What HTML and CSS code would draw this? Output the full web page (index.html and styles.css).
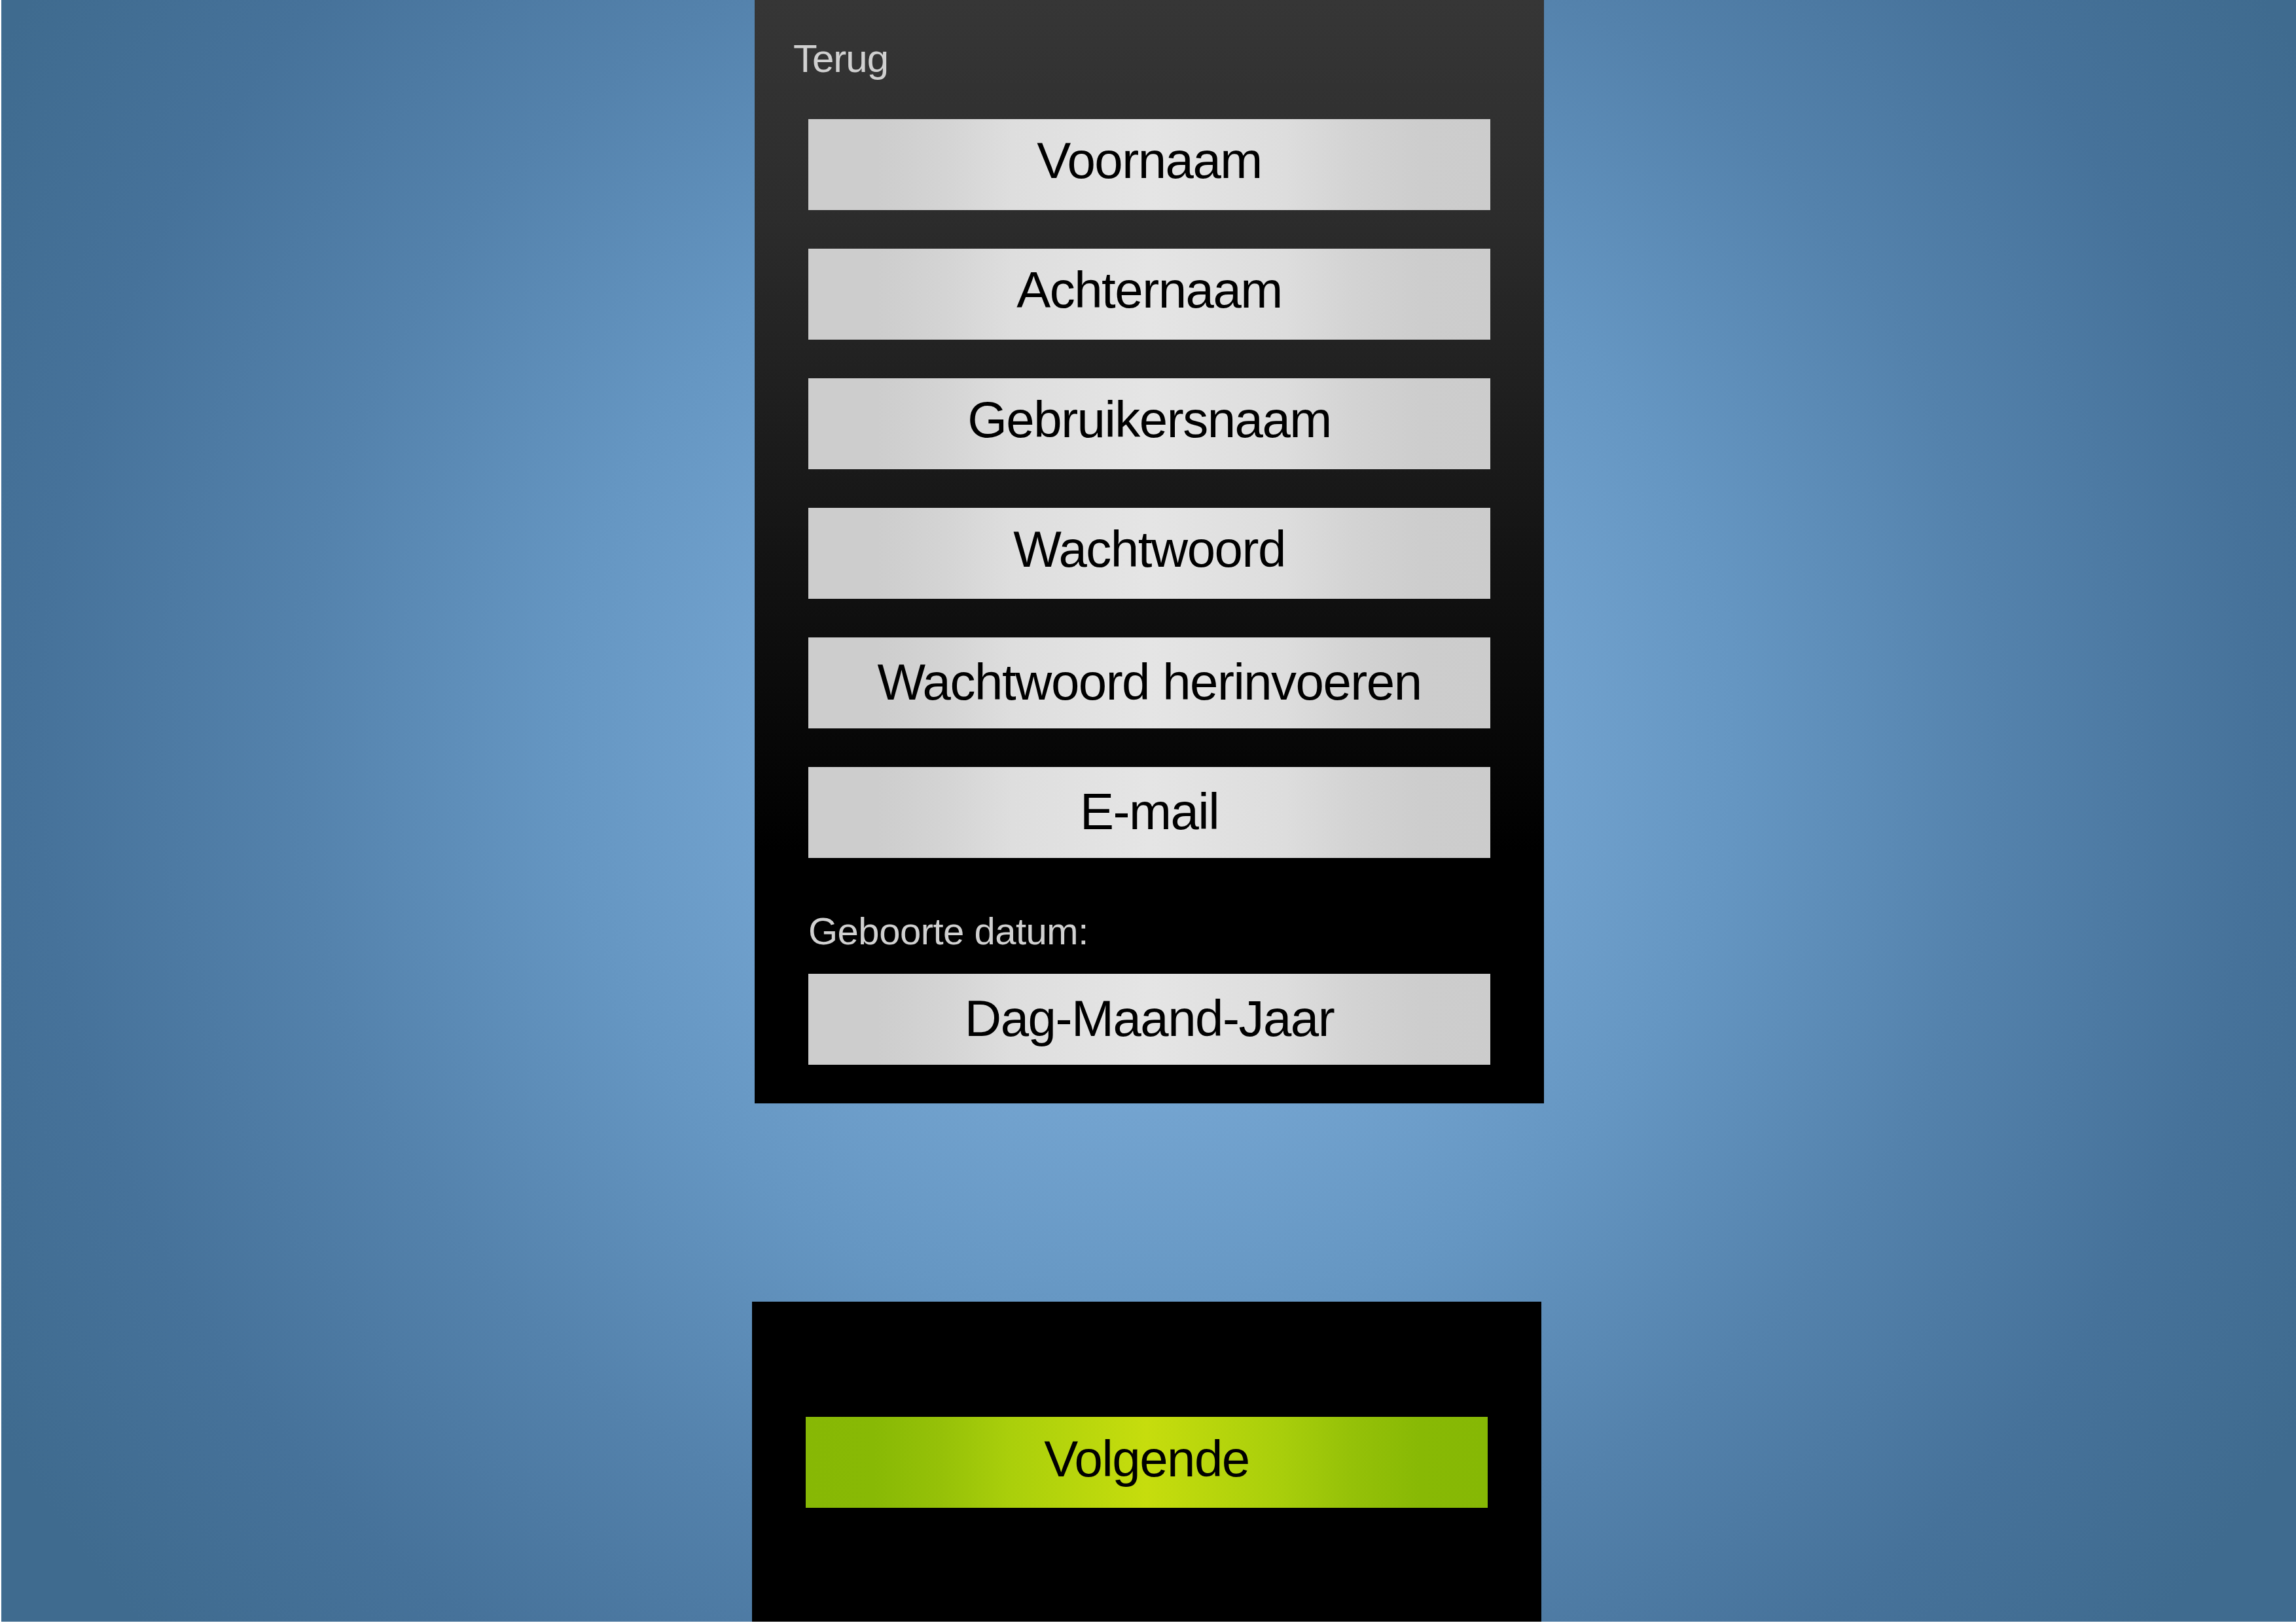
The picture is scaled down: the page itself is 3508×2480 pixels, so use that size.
FILE: index.html
```html
<!DOCTYPE html>
<html lang="nl">
<head>
<meta charset="utf-8">
<title>Registreren</title>
<link rel="stylesheet" href="styles.css">
</head>
<body>
<div class="stage">
  <section class="panel panel-form">
    <div class="back">Terug</div>
    <div class="fields">
      <div class="field">Voornaam</div>
      <div class="field">Achternaam</div>
      <div class="field">Gebruikersnaam</div>
      <div class="field">Wachtwoord</div>
      <div class="field centered">Wachtwoord herinvoeren</div>
      <div class="field centered">E-mail</div>
    </div>
    <div class="label">Geboorte datum:</div>
    <div class="field centered">Dag-Maand-Jaar</div>
  </section>
  <section class="panel panel-next">
    <div class="field next">Volgende</div>
  </section>
</div>
</body>
</html>
```

FILE: styles.css
```css
html, body {
  margin: 0;
  padding: 0;
  background: #ffffff;
}

body {
  font-family: "Liberation Sans", Arial, sans-serif;
  width: 3508px;
  height: 2480px;
  overflow: hidden;
}

.stage {
  margin-left: 2px;
  width: 3506px;
  height: 2478px;
  background: radial-gradient(circle at 1752px 1130px, #7aaad6 0px, #78a8d4 450px, #6596c2 900px, #5482ac 1300px, #46729a 1700px, #3f6b8f 2050px);
  display: flex;
  flex-direction: column;
}

.panel {
  box-sizing: border-box;
  width: 1206px;
  display: flex;
  flex-direction: column;
  padding-left: 82px;
  padding-right: 82px;
}

.panel-form {
  margin-left: 1151px;
  height: 1686px;
  padding-top: 60px;
  background: linear-gradient(180deg, #363636 0px, #2c2c2c 330px, #111111 900px, #000000 1300px);
}

.back {
  margin-left: -23px;
  height: 60px;
  line-height: 60px;
  font-size: 60px;
  letter-spacing: -1px;
  color: #d0d0d0;
}

.fields {
  margin-top: 62px;
  display: flex;
  flex-direction: column;
  gap: 59px;
}

.field {
  height: 139px;
  line-height: 127px;
  font-size: 78px;
  letter-spacing: -1.5px;
  text-align: center;
  color: #000000;
  white-space: nowrap;
  background: linear-gradient(90deg, #cdcdcd 0%, #cdcdcd 10%, #d4d4d4 20%, #dedede 30%, #e5e5e5 50%, #dddddd 70%, #d3d3d3 80%, #cdcdcd 90%, #cccccc 100%);
}

.field.centered {
  line-height: 137px;
}

.label {
  margin-top: 83px;
  margin-bottom: 36px;
  height: 58px;
  line-height: 58px;
  font-size: 58px;
  letter-spacing: -0.5px;
  color: #d0d0d0;
}

.panel-next {
  margin-left: 1147px;
  margin-top: 303px;
  height: 489px;
  padding-top: 176px;
  background: #000000;
}

.field.next {
  line-height: 129px;
  background: linear-gradient(90deg, #87b805 0%, #88b905 10%, #96c108 20%, #aacf0b 30%, #c6dd0d 50%, #a8ce0b 70%, #95c108 80%, #88b905 90%, #86b805 100%);
}
```
